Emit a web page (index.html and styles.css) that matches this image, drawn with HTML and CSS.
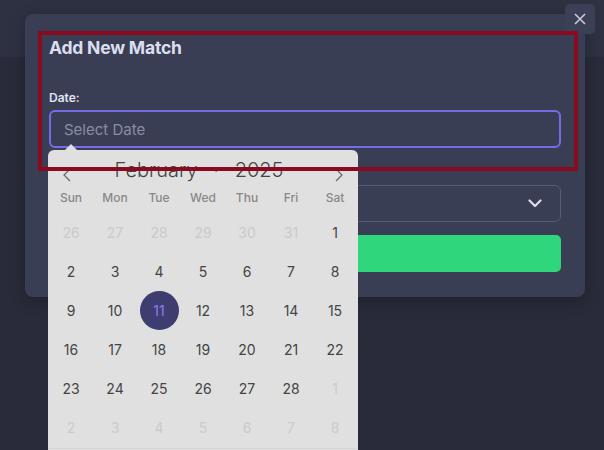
FILE: index.html
```html
<!DOCTYPE html>
<html>
<head>
<meta charset="utf-8">
<link rel="stylesheet" href="styles.css">
</head>
<body>
<div class="page">
  <div class="topbar"></div>
  <div class="rest"></div>
</div>

<div class="modal">
  <h2 class="title">Add New Match</h2>
  <label class="label">Date:</label>
  <div class="input">Select Date</div>
  <div class="select">
    <svg class="chev" width="14" height="9" viewBox="0 0 14 9"><path d="M1.5 1.5L7 7L12.5 1.5" stroke="#dcdcf0" stroke-width="2.2" fill="none" stroke-linecap="round" stroke-linejoin="round"/></svg>
  </div>
  <div class="submit"></div>
</div>

<button class="close-btn" aria-label="Close">
  <svg width="12" height="12" viewBox="0 0 12 12"><path d="M1 1L11 11M11 1L1 11" stroke="#c9cbdc" stroke-width="1.6" fill="none"/></svg>
</button>

<div class="calendar">
  <div class="cal-arrow"></div>
  <div class="cal-head">
    <span class="nav">
      <svg width="8" height="14" viewBox="0 0 8 14"><path d="M7 1L1 7L7 13" stroke="#666" stroke-width="1.2" fill="none"/></svg>
    </span>
    <span class="month">February <span class="dot">·</span> 2025</span>
    <span class="nav">
      <svg width="8" height="14" viewBox="0 0 8 14"><path d="M1 1L7 7L1 13" stroke="#666" stroke-width="1.2" fill="none"/></svg>
    </span>
  </div>
  <div class="grid weekdays">
    <span>Sun</span><span>Mon</span><span>Tue</span><span>Wed</span><span>Thu</span><span>Fri</span><span>Sat</span>
  </div>
  <div class="grid days">
    <span class="muted">26</span><span class="muted">27</span><span class="muted">28</span><span class="muted">29</span><span class="muted">30</span><span class="muted">31</span><span>1</span>
    <span>2</span><span>3</span><span>4</span><span>5</span><span>6</span><span>7</span><span>8</span>
    <span>9</span><span>10</span><span class="sel"><i>11</i></span><span>12</span><span>13</span><span>14</span><span>15</span>
    <span>16</span><span>17</span><span>18</span><span>19</span><span>20</span><span>21</span><span>22</span>
    <span>23</span><span>24</span><span>25</span><span>26</span><span>27</span><span>28</span><span class="muted">1</span>
    <span class="muted">2</span><span class="muted">3</span><span class="muted">4</span><span class="muted">5</span><span class="muted">6</span><span class="muted">7</span><span class="muted">8</span>
  </div>
  <div class="cal-foot"></div>
</div>

<div class="annotation"></div>
</body>
</html>
```
FILE: styles.css
```css
* { box-sizing: border-box; }
html, body { margin: 0; padding: 0; }
body {
  width: 604px;
  height: 450px;
  overflow: hidden;
  font-family: Inter, "Liberation Sans", sans-serif;
  background: #292b3a;
  position: relative;
}
.page { display: flex; flex-direction: column; height: 450px; }
.topbar { height: 57px; background: #2e3142; }
.rest { flex: 1; background: #292b3a; }

.close-btn {
  position: absolute;
  z-index: 2;
  left: 565px;
  top: 4px;
  width: 30px;
  height: 30px;
  border: 0;
  border-radius: 5px;
  background: #3c4057;
  display: flex;
  align-items: center;
  justify-content: center;
  padding: 0;
}

.modal {
  position: absolute;
  left: 25px;
  top: 14px;
  width: 560px;
  height: 283px;
  background: #3a3e54;
  border-radius: 8px;
  padding: 23px 24px 25px 24px;
  display: flex;
  flex-direction: column;
  box-shadow: 0 4px 16px rgba(0,0,0,0.25);
}
.title {
  margin: 0;
  font-size: 17.5px;
  line-height: 22px;
  font-weight: 700;
  color: #dcdef0;
  letter-spacing: -0.2px;
}
.label {
  margin-top: 31px;
  font-size: 12px;
  line-height: 16px;
  font-weight: 600;
  color: #e2e3f2;
}
.input {
  margin-top: 4px;
  height: 38px;
  border: 2px solid #776ce6;
  border-radius: 6px;
  padding-left: 13px;
  display: flex;
  align-items: center;
  font-size: 15px;
  color: #8a8ca6;
}
.select {
  margin-top: 37px;
  height: 37px;
  border: 1px solid #575b76;
  border-radius: 6px;
  display: flex;
  align-items: center;
  justify-content: flex-end;
  padding-right: 18px;
}
.submit {
  margin-top: 13px;
  height: 37px;
  background: #30d67b;
  border-radius: 5px;
}

.calendar {
  position: absolute;
  left: 48px;
  top: 150px;
  width: 310px;
  height: 310px;
  background: #e0e0e0;
  border-radius: 6px;
  padding: 0 1px;
}
.cal-arrow {
  position: absolute;
  left: 17px;
  top: -6px;
  width: 0;
  height: 0;
  border-left: 6px solid transparent;
  border-right: 6px solid transparent;
  border-bottom: 6px solid #e0e0e0;
}
.cal-head {
  height: 35px;
  display: flex;
  align-items: center;
  justify-content: space-between;
  padding: 4px 14px 0 14px;
}
.nav { display: flex; align-items: center; padding-top: 10px; }
.month {
  font-size: 20px;
  font-weight: 300;
  color: #444;
  letter-spacing: 0px;
  margin-left: -8px;
}
.dot { margin: 0 10px; font-weight: 400; }
.grid {
  display: grid;
  grid-template-columns: repeat(7, 44px);
}
.weekdays {
  height: 24px;
  align-items: center;
  font-size: 12px;
  color: #888;
  font-weight: 500;
}
.weekdays span { text-align: center; }
.days {
  margin-top: 4px;
  grid-auto-rows: 39px;
  font-size: 14px;
  color: #444;
}
.days span {
  display: flex;
  align-items: center;
  justify-content: center;
}
.days .muted { color: #cacaca; }
.days .sel i {
  font-style: normal;
  width: 39px;
  height: 39px;
  border-radius: 50%;
  background: #3e3d6f;
  color: #8b7cf2;
  display: flex;
  align-items: center;
  justify-content: center;
}
.cal-foot {
  border-top: 1px solid #d4d4d4;
  margin-top: 1px;
}

.annotation {
  position: absolute;
  z-index: 3;
  left: 38px;
  top: 31px;
  width: 540px;
  height: 140px;
  border: 4px solid #8a0a1f;
  pointer-events: none;
}
```
